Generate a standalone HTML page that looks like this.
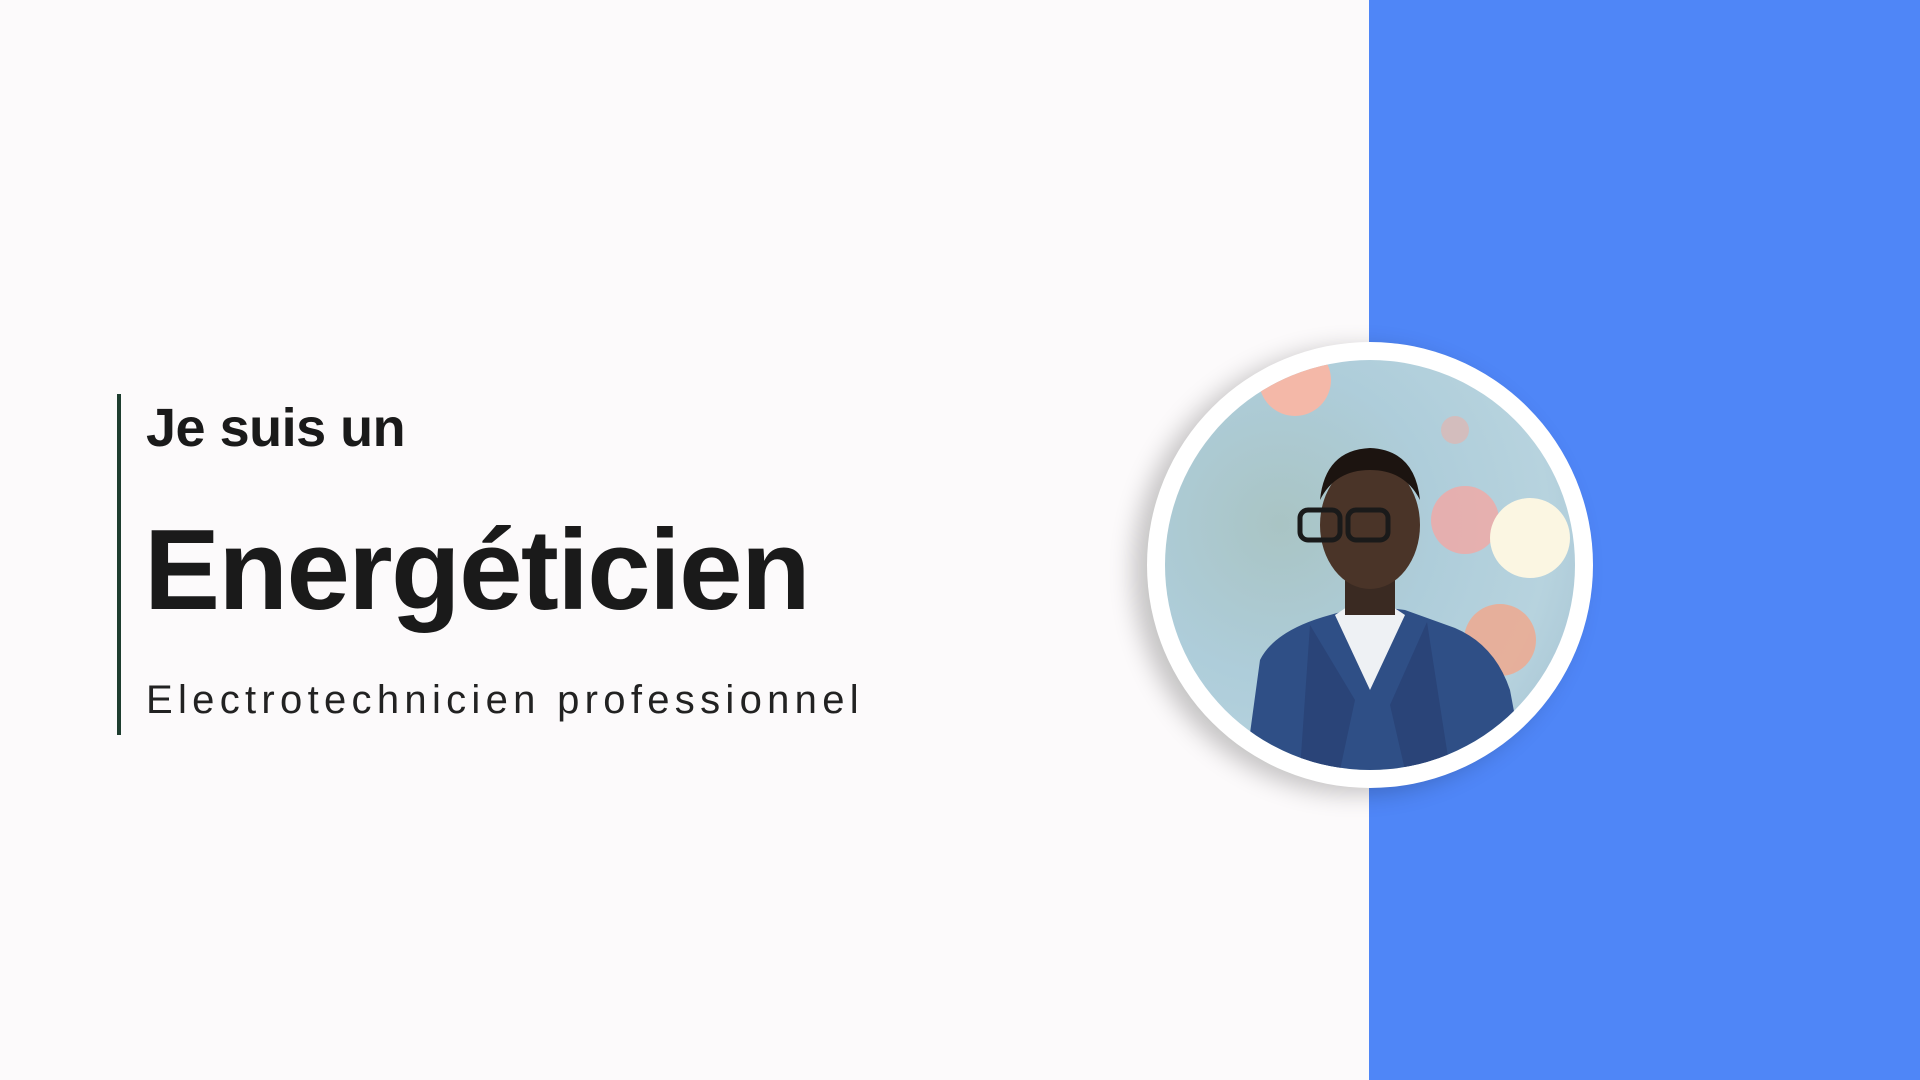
<!DOCTYPE html>
<html><head><meta charset="utf-8"><style>
html,body{margin:0;padding:0}
body{width:1920px;height:1080px;position:relative;overflow:hidden;background:#fcfafb;font-family:"Liberation Sans",sans-serif;color:#1a1a1a}
.blue{position:absolute;left:1369px;top:0;width:551px;height:1080px;background:#4f86f7}
.bar{position:absolute;left:117px;top:394px;width:4px;height:341px;background:#1e3d2f}
.t1{position:absolute;left:146px;top:401px;font-size:54px;font-weight:bold;letter-spacing:-0.5px;line-height:1}
.t2{position:absolute;left:144px;top:514px;font-size:114px;font-weight:bold;letter-spacing:-1.6px;line-height:1}
.t3{position:absolute;left:146px;top:680px;font-size:40px;letter-spacing:5.3px;line-height:1;color:#222}
.ring{position:absolute;left:1147px;top:342px;width:446px;height:446px;border-radius:50%;background:#fff;box-shadow:-14px 6px 24px rgba(0,0,0,.22)}
.photo{position:absolute;left:18px;top:18px;width:410px;height:410px;border-radius:50%;overflow:hidden;
background:radial-gradient(circle at 28% 40%,#a9c4c4 0,#aecdda 40%,#b7d3de 70%,#9fbdd0 100%)}
</style></head><body>
<div class="blue"></div>
<div class="bar"></div>
<div class="t1">Je suis un</div>
<div class="t2">Energéticien</div>
<div class="t3">Electrotechnicien professionnel</div>
<div class="ring"><div class="photo">
<svg width="410" height="410" viewBox="0 0 410 410">
<circle cx="130" cy="20" r="36" fill="#f4b8a8"/>
<circle cx="300" cy="160" r="34" fill="#f2a8a4" opacity=".8"/>
<circle cx="365" cy="178" r="40" fill="#fbf6e2"/>
<circle cx="335" cy="280" r="36" fill="#efa98f" opacity=".85"/>
<circle cx="290" cy="70" r="14" fill="#e9b0a8" opacity=".6"/>
<path d="M80 410 L95 300 Q110 270 165 255 L200 245 L240 250 L290 268 Q330 285 345 330 L360 410 Z" fill="#2f4f86"/>
<path d="M170 255 L205 330 L240 255 L225 245 L185 245 Z" fill="#eef1f4"/>
<path d="M145 265 L190 340 L175 410 L135 410 Z" fill="#2a4478"/>
<path d="M262 262 L225 345 L240 410 L285 410 Z" fill="#2a4478"/>
<rect x="180" y="200" width="50" height="55" fill="#3a2a22"/>
<ellipse cx="205" cy="165" rx="50" ry="64" fill="#4a3428"/>
<path d="M155 140 Q160 90 205 88 Q250 90 255 140 Q240 110 205 110 Q170 110 155 140Z" fill="#1c1410"/>
<rect x="135" y="150" width="40" height="30" rx="8" fill="none" stroke="#1a1a1a" stroke-width="5"/>
<rect x="183" y="150" width="40" height="30" rx="8" fill="none" stroke="#1a1a1a" stroke-width="5"/>
</svg>
</div></div>
</body></html>
